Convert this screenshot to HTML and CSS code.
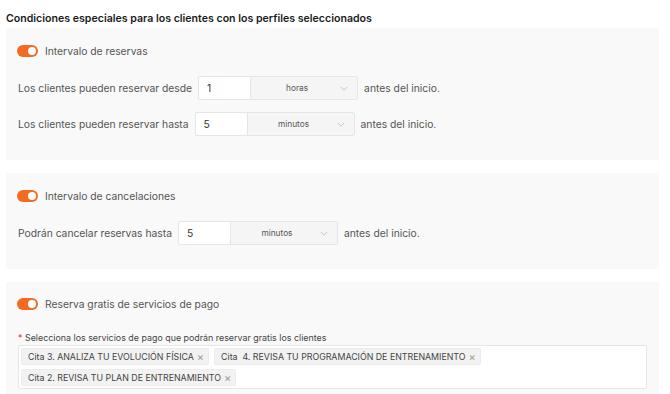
FILE: index.html
```html
<!DOCTYPE html>
<html lang="es">
<head>
  <meta charset="UTF-8" />
  <title>Condiciones especiales</title>
  <link rel="stylesheet" href="styles.css">
</head>
<body>
  <h3 class="title">Condiciones especiales para los clientes con los perfiles seleccionados</h3>

  <section class="panel">
    <label class="switch-row"><span class="switch"></span>Intervalo de reservas</label>
    <div class="field-row">
      <span>Los clientes pueden reservar desde</span>
      <div class="combo">
        <span class="num">1</span>
        <span class="unit">horas<svg class="chev" viewBox="0 0 10 6"><path d="M1 1l4 4 4-4"/></svg></span>
      </div>
      <span>antes del inicio.</span>
    </div>
    <div class="field-row">
      <span>Los clientes pueden reservar hasta</span>
      <div class="combo">
        <span class="num">5</span>
        <span class="unit">minutos<svg class="chev" viewBox="0 0 10 6"><path d="M1 1l4 4 4-4"/></svg></span>
      </div>
      <span>antes del inicio.</span>
    </div>
  </section>

  <section class="panel">
    <label class="switch-row"><span class="switch"></span>Intervalo de cancelaciones</label>
    <div class="field-row">
      <span>Podrán cancelar reservas hasta</span>
      <div class="combo">
        <span class="num">5</span>
        <span class="unit">minutos<svg class="chev" viewBox="0 0 10 6"><path d="M1 1l4 4 4-4"/></svg></span>
      </div>
      <span>antes del inicio.</span>
    </div>
  </section>

  <section class="panel last">
    <label class="switch-row"><span class="switch"></span>Reserva gratis de servicios de pago</label>
    <div class="sel-label"><span class="req">*</span> Selecciona los servicios de pago que podrán reservar gratis los clientes</div>
    <div class="tags">
      <span class="tag">Cita 3. ANALIZA TU EVOLUCIÓN FÍSICA<span class="x">×</span></span>
      <span class="tag">Cita&nbsp; 4. REVISA TU PROGRAMACIÓN DE ENTRENAMIENTO<span class="x">×</span></span>
      <span class="tag">Cita 2. REVISA TU PLAN DE ENTRENAMIENTO<span class="x">×</span></span>
    </div>
  </section>
</body>
</html>
```

FILE: styles.css
```css
:root {
  --orange: #f36b21;
  --panel: #f9f9f9;
  --border: #e6e6e6;
  --text: #555;
}

* {
  margin: 0;
  padding: 0;
  box-sizing: border-box;
}

body {
  font-family: Inter, "Noto Sans", sans-serif;
  background: #fff;
  color: var(--text);
  padding: 12px 11px 0 6px;
  font-size: 10.3px;
}

.title {
  font-size: 10.6px;
  font-weight: 600;
  color: #1a1a1a;
  line-height: 14px;
  margin-bottom: 2px;
}

.panel {
  background: var(--panel);
  padding: 17px 12px 24px;
  margin-bottom: 13px;
}

.switch-row {
  display: flex;
  align-items: center;
  gap: 7px;
  height: 12px;
  margin-left: -1px;
}

.switch {
  width: 21px;
  height: 12px;
  border-radius: 6px;
  background: var(--orange);
  position: relative;
}

.switch::after {
  content: "";
  position: absolute;
  right: 2px;
  top: 2px;
  width: 8px;
  height: 8px;
  border-radius: 50%;
  background: #fff;
}

.field-row {
  display: flex;
  align-items: center;
  gap: 6px;
  height: 24px;
  margin-top: 12px;
}

.switch-row + .field-row {
  margin-top: 19px;
}

.combo {
  display: flex;
  height: 24px;
  border: 1px solid var(--border);
  border-radius: 2px;
  background: #fff;
}

.num {
  width: 52px;
  padding-left: 8px;
  display: flex;
  align-items: center;
  border-right: 1px solid var(--border);
  font-size: 10.3px;
  color: #333;
}

.unit {
  width: 106px;
  background: #f5f5f5;
  display: flex;
  align-items: center;
  justify-content: center;
  position: relative;
  font-size: 8.3px;
  color: #555;
  padding-right: 14px;
}

.chev {
  position: absolute;
  right: 9px;
  top: 9px;
  width: 8px;
  height: 5px;
  fill: none;
  stroke: #bbb;
  stroke-width: 1;
}

.last {
  padding-top: 16px;
  padding-bottom: 6px;
}

.sel-label {
  font-size: 8.9px;
  color: #444;
  margin-top: 22px;
  line-height: 12px;
}

.req {
  color: #f5222d;
}

.tags {
  margin-top: 1px;
  border: 1px solid var(--border);
  background: #fff;
  border-radius: 2px;
  padding: 2px;
  display: flex;
  flex-wrap: wrap;
  gap: 4px 5px;
}

.tag {
  background: #f2f2f2;
  border: 1px solid #ececec;
  border-radius: 2px;
  height: 17px;
  padding: 0 4px 0 6px;
  display: flex;
  align-items: center;
  font-size: 8.8px;
  color: #444;
}

.x {
  color: #999;
  margin-left: 3px;
  font-size: 11px;
}
```
